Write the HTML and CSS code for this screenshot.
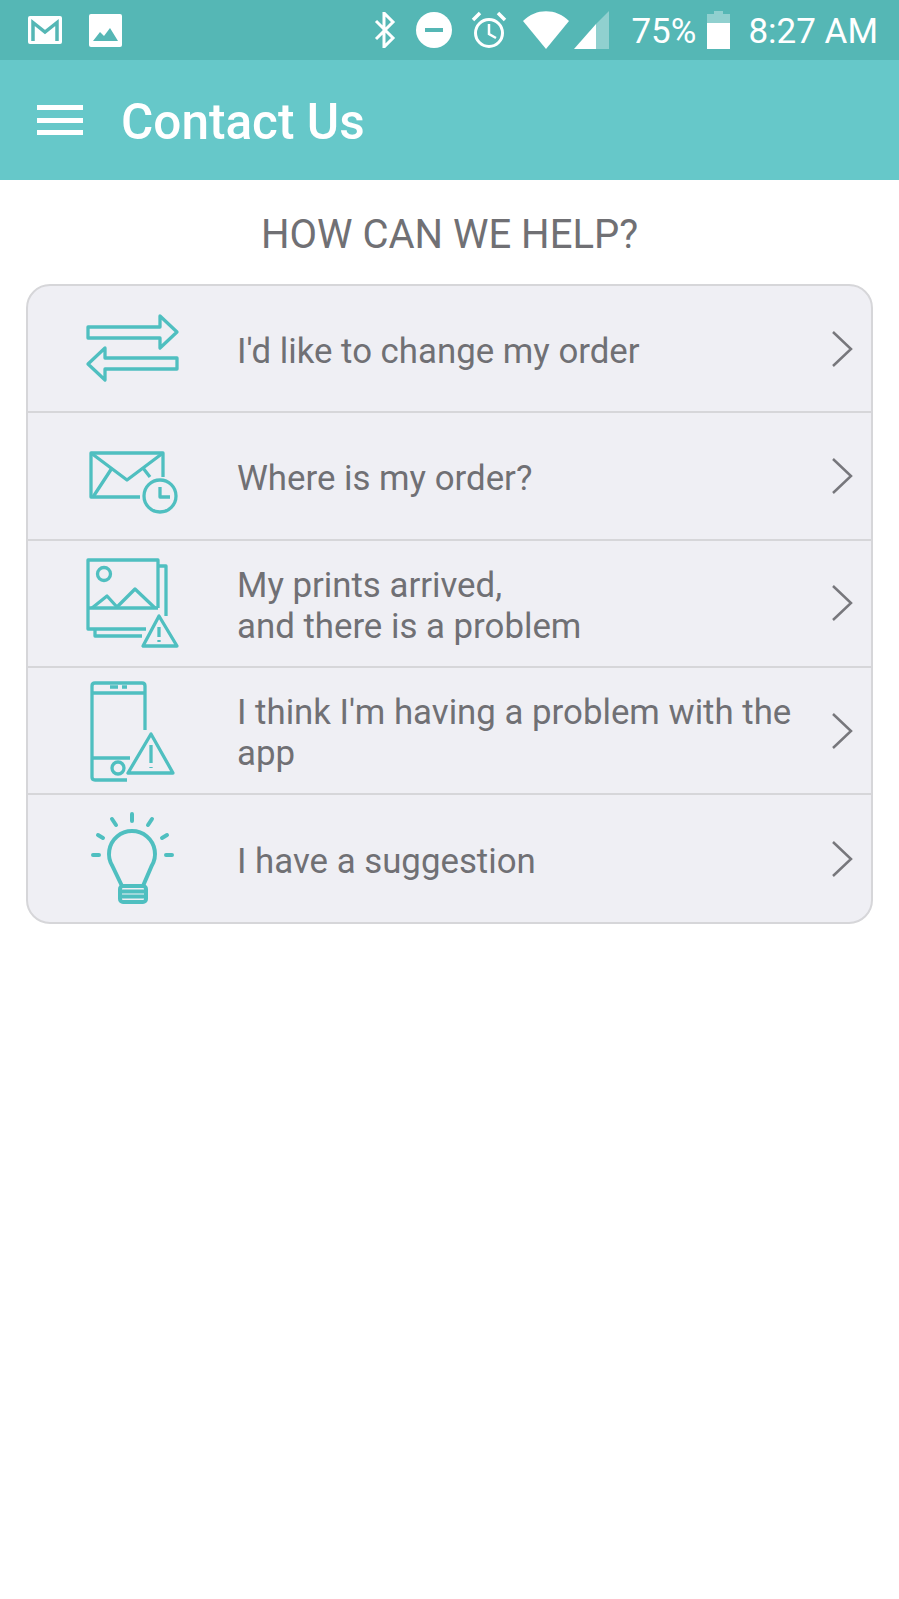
FILE: index.html
```html
<!DOCTYPE html>
<html lang="en">
<head>
    <meta charset="UTF-8">
    <title>Contact Us</title>
    <link rel="stylesheet" href="styles.css">
</head>
<body>
    <div class="status-bar">
        <svg class="st-gmail" width="36" height="30" viewBox="0 0 36 30">
            <rect x="1" y="1" width="34" height="28" rx="2" fill="#fff"/>
            <path d="M6 26V7.5L18 17 30 7.5V26" fill="none" stroke="#55b7b5" stroke-width="3.5"/>
        </svg>
        <svg class="st-photo" width="33" height="33" viewBox="0 0 33 33">
            <rect width="33" height="33" rx="2" fill="#fff"/>
            <path d="M4 27L11 18 15 22 21 14 29 27Z" fill="#55b7b5"/>
        </svg>
        <div class="status-right">
            <svg class="st-bt" width="22" height="36" viewBox="0 0 22 36">
                <path d="M2 9L19 26 10 35V1L19 10 2 27" fill="none" stroke="#fff" stroke-width="3"/>
            </svg>
            <svg class="st-dnd" width="36" height="36" viewBox="0 0 36 36">
                <circle cx="18" cy="18" r="18" fill="#fff"/>
                <rect x="9" y="16" width="18" height="4" fill="#55b7b5"/>
            </svg>
            <svg class="st-alarm" width="36" height="38" viewBox="0 0 36 38">
                <circle cx="18" cy="22" r="13.5" fill="none" stroke="#fff" stroke-width="3"/>
                <path d="M18 13V23L25 27" fill="none" stroke="#fff" stroke-width="2.5"/>
                <path d="M2 9L9 2M34 9L27 2" fill="none" stroke="#fff" stroke-width="3.5"/>
            </svg>
            <svg class="st-wifi" width="46" height="38" viewBox="0 0 46 38">
                <path d="M0 10C13 -3 33 -3 46 10L23 38Z" fill="#fff"/>
            </svg>
            <svg class="st-signal" width="35" height="38" viewBox="0 0 35 38">
                <path d="M35 0V38H22V13Z" fill="#fff" opacity=".35"/>
                <path d="M22 13V38H0Z" fill="#fff"/>
            </svg>
            <span class="st-pct">75%</span>
            <svg class="st-batt" width="23" height="38" viewBox="0 0 23 38">
                <path d="M7 0H16V3H23V12H0V3H7Z" fill="#fff" opacity=".35"/>
                <rect y="12" width="23" height="26" fill="#fff"/>
            </svg>
            <span class="st-time">8:27 AM</span>
        </div>
    </div>

    <div class="app-bar">
        <div class="burger"><span></span><span></span><span></span></div>
        <h1>Contact Us</h1>
    </div>

    <h2 class="help-title">HOW CAN WE HELP?</h2>

    <div class="menu-card">
        <div class="menu-row">
            <svg class="row-icon" viewBox="0 0 110 110">
                <path d="M10 33H82V22L99 38 82 54V44H10Z"/>
                <path d="M99 64H27V54L10 70 27 86V75H99Z"/>
            </svg>
            <div class="row-text">I'd like to change my order</div>
            <svg class="chevron" width="22" height="38" viewBox="0 0 22 38"><path d="M2 2L20 19 2 36"/></svg>
        </div>
        <div class="menu-row">
            <svg class="row-icon" viewBox="0 0 110 110">
                <path d="M85 56V32H13V76H62"/>
                <path d="M13 32L49 59 85 32"/>
                <path d="M15 76L34 47M65 47L72 56"/>
                <circle cx="82" cy="75" r="16"/>
                <path d="M82 66V76H92"/>
            </svg>
            <div class="row-text">Where is my order?</div>
            <svg class="chevron" width="22" height="38" viewBox="0 0 22 38"><path d="M2 2L20 19 2 36"/></svg>
        </div>
        <div class="menu-row">
            <svg class="row-icon" viewBox="0 0 110 110">
                <path d="M68 81H10V12H80V60"/>
                <path d="M10 60H80"/>
                <path d="M80 18H88V68M17 81V88H64"/>
                <circle cx="26" cy="26" r="6.5"/>
                <path d="M14 60L29 48 39 59 57 41 77 60"/>
                <path d="M81 68L65 98H99Z"/>
                <path d="M81 79V89M81 92V94"/>
            </svg>
            <div class="row-text">My prints arrived,<br>and there is a problem</div>
            <svg class="chevron" width="22" height="38" viewBox="0 0 22 38"><path d="M2 2L20 19 2 36"/></svg>
        </div>
        <div class="menu-row">
            <svg class="row-icon" viewBox="0 0 110 110">
                <path d="M67 54V10Q67 7 64 7H17Q14 7 14 10V101Q14 104 17 104H49"/>
                <path d="M14 17H67M14 82H52"/>
                <path d="M32 11H40M44 11H49"/>
                <circle cx="40" cy="92" r="6"/>
                <path d="M73 58L50 97H95Z"/>
                <path d="M73 69V87M73 91V92"/>
            </svg>
            <div class="row-text">I think I'm having a problem with the app</div>
            <svg class="chevron" width="22" height="38" viewBox="0 0 22 38"><path d="M2 2L20 19 2 36"/></svg>
        </div>
        <div class="menu-row">
            <svg class="row-icon row-icon-bulb" viewBox="0 0 110 110">
                <path d="M44 82L34.400 62A23 23 0 1 1 73.600 62L65 82"/>
                <rect x="42" y="82" width="26" height="16" rx="3"/>
                <path d="M44 87.500H66M44 92.500H66"/>
                <path d="M54 10V17M34 15L38 21M74 15L70 21M20 31L25 34M89 31L84 34M15 51H21M88 51H94"/>
            </svg>
            <div class="row-text">I have a suggestion</div>
            <svg class="chevron" width="22" height="38" viewBox="0 0 22 38"><path d="M2 2L20 19 2 36"/></svg>
        </div>
    </div>
</body>
</html>
```

FILE: styles.css
```css
* {
    margin: 0;
    padding: 0;
    box-sizing: border-box;
}

body {
    font-family: Roboto, "Liberation Sans", sans-serif;
    background: #fff;
    min-height: 1599px;
}

.status-bar {
    height: 60px;
    background: #55b7b5;
    display: flex;
    align-items: center;
    padding: 0 21px 0 27px;
    color: #fff;
}

.st-photo {
    margin-left: 26px;
}

.status-right {
    margin-left: auto;
    display: flex;
    align-items: center;
    font-size: 35px;
}

.st-dnd { margin-left: 20px; }
.st-alarm { margin-left: 19px; }
.st-wifi { margin-left: 16px; }
.st-signal { margin-left: 5px; }
.st-pct { margin-left: 22px; padding-top: 2px; }
.st-batt { margin-left: 11px; }
.st-time { margin-left: 18px; padding-top: 2px; }

.app-bar {
    height: 120px;
    background: #66c8c9;
    display: flex;
    align-items: center;
    padding-left: 37px;
    color: #fff;
}

.burger {
    width: 46px;
    display: flex;
    flex-direction: column;
    gap: 7.500px;
    margin-right: 38px;
}

.burger span {
    display: block;
    height: 5px;
    background: #fff;
}

.app-bar h1 {
    font-size: 49.500px;
    font-weight: 500;
    padding-top: 4px;
}

.help-title {
    font-size: 40px;
    font-weight: 400;
    color: #707074;
    text-align: center;
    padding-top: 31px;
    height: 104px;
}

.menu-card {
    width: 847px;
    margin-left: 26px;
    background: #efeff4;
    border: 2px solid #d6d6d9;
    border-radius: 24px;
}

.menu-row {
    height: 127.300px;
    display: flex;
    align-items: center;
    padding-left: 50px;
    border-bottom: 2px solid #d6d6d9;
}

.menu-row:last-child {
    height: 127px;
    border-bottom: none;
}

.row-icon {
    width: 110px;
    height: 110px;
    flex-shrink: 0;
    margin-right: 49px;
    fill: none;
    stroke: #4fbfc0;
    stroke-width: 3.300;
    stroke-linejoin: round;
}

.row-icon-bulb {
    stroke-width: 4;
    stroke-linecap: round;
}

.row-text {
    flex: 1;
    font-size: 34.800px;
    line-height: 41px;
    color: #707074;
    padding-top: 5px;
}

.chevron {
    flex-shrink: 0;
    margin: 0 18px 0 38px;
    fill: none;
    stroke: #77777c;
    stroke-width: 2.500;
}
```
